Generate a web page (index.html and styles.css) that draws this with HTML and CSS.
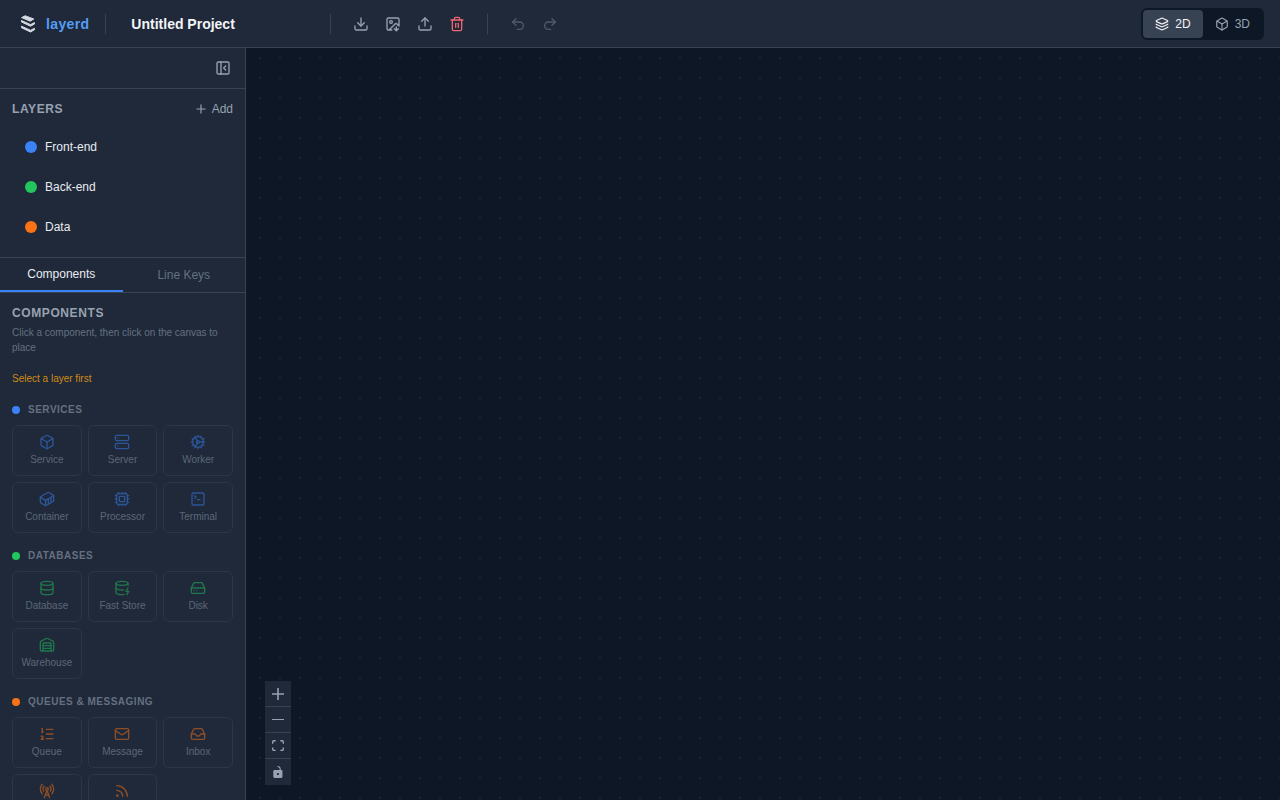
FILE: index.html
```html
<!DOCTYPE html>
<html lang="en">
<head>
    <meta charset="UTF-8">
    <meta name="viewport" content="width=device-width, initial-scale=1.0">
    <title>layerd</title>
    <link rel="stylesheet" href="styles.css">
</head>
<body>
    <header class="topbar">
        <a class="logo" href="#">
            <svg class="logo-mark" viewBox="0 0 24 24">
                <path d="M9.200 3.800 17.800 7 14.200 9.200 5.600 5.600z"/>
                <path d="M5.500 8.500 14.500 12.600 18.500 10.600V12L14.500 14.200 5.500 10z"/>
                <path d="M5.500 14.200 14.500 18.300 18.500 16.300V17.700L14.500 20 5.500 15.700z"/>
            </svg>
            <span>layerd</span>
        </a>
        <div class="divider"></div>
        <input class="project-name" type="text" value="Untitled Project" aria-label="Project name">
        <div class="divider"></div>
        <div class="tools">
            <button class="tool" title="Save">
                <svg class="icon" viewBox="0 0 24 24"><path d="M21 15v4a2 2 0 0 1-2 2H5a2 2 0 0 1-2-2v-4"/><path d="m7 10 5 5 5-5"/><path d="M12 15V3"/></svg>
            </button>
            <button class="tool" title="Export image">
                <svg class="icon" viewBox="0 0 24 24"><path d="M10.300 21H5a2 2 0 0 1-2-2V5a2 2 0 0 1 2-2h14a2 2 0 0 1 2 2v10l-3.100-3.100a2 2 0 0 0-2.814.014L6 21"/><path d="m14 19 3 3v-5.500"/><path d="m17 22 3-3"/><circle cx="9" cy="9" r="2"/></svg>
            </button>
            <button class="tool" title="Import">
                <svg class="icon" viewBox="0 0 24 24"><path d="M21 15v4a2 2 0 0 1-2 2H5a2 2 0 0 1-2-2v-4"/><path d="m17 8-5-5-5 5"/><path d="M12 3v12"/></svg>
            </button>
            <button class="tool danger" title="Clear">
                <svg class="icon" viewBox="0 0 24 24"><path d="M3 6h18"/><path d="M19 6v14a2 2 0 0 1-2 2H7a2 2 0 0 1-2-2V6"/><path d="M8 6V4a2 2 0 0 1 2-2h4a2 2 0 0 1 2 2v2"/><path d="M10 11v6"/><path d="M14 11v6"/></svg>
            </button>
        </div>
        <div class="divider"></div>
        <div class="tools">
            <button class="tool" title="Undo" disabled>
                <svg class="icon" viewBox="0 0 24 24"><path d="M9 14 4 9l5-5"/><path d="M4 9h10.500a5.500 5.500 0 0 1 0 11H11"/></svg>
            </button>
            <button class="tool" title="Redo" disabled>
                <svg class="icon" viewBox="0 0 24 24"><path d="m15 14 5-5-5-5"/><path d="M20 9H9.500a5.500 5.500 0 0 0 0 11H13"/></svg>
            </button>
        </div>
        <div class="view-toggle">
            <button class="view active">
                <svg class="icon" viewBox="0 0 24 24"><path d="M12.830 2.180a2 2 0 0 0-1.660 0L2.600 6.080a1 1 0 0 0 0 1.830l8.580 3.910a2 2 0 0 0 1.660 0l8.580-3.900a1 1 0 0 0 0-1.830z"/><path d="M2 12a1 1 0 0 0 .58.910l8.600 3.910a2 2 0 0 0 1.650 0l8.580-3.900A1 1 0 0 0 22 12"/><path d="M2 17a1 1 0 0 0 .58.910l8.600 3.910a2 2 0 0 0 1.650 0l8.580-3.900A1 1 0 0 0 22 17"/></svg>
                2D
            </button>
            <button class="view">
                <svg class="icon" viewBox="0 0 24 24"><path d="M21 8a2 2 0 0 0-1-1.730l-7-4a2 2 0 0 0-2 0l-7 4A2 2 0 0 0 3 8v8a2 2 0 0 0 1 1.730l7 4a2 2 0 0 0 2 0l7-4A2 2 0 0 0 21 16Z"/><path d="m3.300 7 8.700 5 8.700-5"/><path d="M12 22V12"/></svg>
                3D
            </button>
        </div>
    </header>

    <div class="workspace">
        <aside class="sidebar">
            <div class="sidebar-top">
                <button class="collapse" title="Collapse sidebar">
                    <svg class="icon" viewBox="0 0 24 24"><rect x="3" y="3" width="18" height="18" rx="2"/><path d="M9 3v18"/><path d="m16 15-3-3 3-3"/></svg>
                </button>
            </div>

            <section class="layers">
                <div class="layers-head">
                    <h2 class="title">Layers</h2>
                    <button class="add">
                        <svg class="icon" viewBox="0 0 24 24"><path d="M5 12h14"/><path d="M12 5v14"/></svg>
                        Add
                    </button>
                </div>
                <ul class="layer-list">
                    <li><button class="layer"><span class="dot blue"></span>Front-end</button></li>
                    <li><button class="layer"><span class="dot green"></span>Back-end</button></li>
                    <li><button class="layer"><span class="dot orange"></span>Data</button></li>
                </ul>
            </section>

            <div class="tabs">
                <button class="tab active">Components</button>
                <button class="tab">Line Keys</button>
            </div>

            <div class="palette">
                <h2 class="title">Components</h2>
                <p class="hint">Click a component, then click on the canvas to place</p>
                <p class="warning">Select a layer first</p>

                <section class="group services">
                    <h3 class="group-title"><span class="dot blue"></span>Services</h3>
                    <div class="cards">
                        <button class="card" disabled>
                            <svg class="icon" viewBox="0 0 24 24"><path d="M21 8a2 2 0 0 0-1-1.730l-7-4a2 2 0 0 0-2 0l-7 4A2 2 0 0 0 3 8v8a2 2 0 0 0 1 1.730l7 4a2 2 0 0 0 2 0l7-4A2 2 0 0 0 21 16Z"/><path d="m3.300 7 8.700 5 8.700-5"/><path d="M12 22V12"/></svg>
                            Service
                        </button>
                        <button class="card" disabled>
                            <svg class="icon" viewBox="0 0 24 24"><rect x="2" y="2" width="20" height="8" rx="2"/><rect x="2" y="14" width="20" height="8" rx="2"/><path d="M6 6h.01"/><path d="M6 18h.01"/></svg>
                            Server
                        </button>
                        <button class="card" disabled>
                            <svg class="icon" viewBox="0 0 24 24"><path d="M12 20a8 8 0 1 0 0-16 8 8 0 0 0 0 16Z"/><path d="M12 14a2 2 0 1 0 0-4 2 2 0 0 0 0 4Z"/><path d="M12 2v2"/><path d="M12 22v-2"/><path d="m17 20.660-1-1.730"/><path d="M11 10.270 7 3.340"/><path d="m20.660 17-1.730-1"/><path d="m3.340 7 1.730 1"/><path d="M14 12h8"/><path d="M2 12h2"/><path d="m20.660 7-1.730 1"/><path d="m3.340 17 1.730-1"/><path d="m17 3.340-1 1.730"/><path d="m11 13.730-4 6.930"/></svg>
                            Worker
                        </button>
                        <button class="card" disabled>
                            <svg class="icon" viewBox="0 0 24 24"><path d="M22 7.700c0-.6-.4-1.200-.8-1.500l-6.300-3.900a1.720 1.720 0 0 0-1.700 0l-10.300 6c-.5.2-.9.8-.9 1.400v6.600c0 .5.4 1.200.8 1.500l6.300 3.900a1.720 1.720 0 0 0 1.700 0l10.300-6c.5-.3.9-1 .9-1.500Z"/><path d="M10 21.900V14L2.100 9.100"/><path d="m10 14 11.900-6.900"/><path d="M14 19.800v-8.100"/><path d="M18 17.500V9.400"/></svg>
                            Container
                        </button>
                        <button class="card" disabled>
                            <svg class="icon" viewBox="0 0 24 24"><rect x="4" y="4" width="16" height="16" rx="2"/><rect x="8" y="8" width="8" height="8" rx="1"/><path d="M12 20v2M12 2v2M17 20v2M17 2v2M7 20v2M7 2v2M2 12h2M2 17h2M2 7h2M20 12h2M20 17h2M20 7h2"/></svg>
                            Processor
                        </button>
                        <button class="card" disabled>
                            <svg class="icon" viewBox="0 0 24 24"><path d="m7 11 2-2-2-2"/><path d="M11 13h4"/><rect x="3" y="3" width="18" height="18" rx="2"/></svg>
                            Terminal
                        </button>
                    </div>
                </section>

                <section class="group databases">
                    <h3 class="group-title"><span class="dot green"></span>Databases</h3>
                    <div class="cards">
                        <button class="card" disabled>
                            <svg class="icon" viewBox="0 0 24 24"><ellipse cx="12" cy="5" rx="9" ry="3"/><path d="M3 5v14a9 3 0 0 0 18 0V5"/><path d="M3 12a9 3 0 0 0 18 0"/></svg>
                            Database
                        </button>
                        <button class="card" disabled>
                            <svg class="icon" viewBox="0 0 24 24"><ellipse cx="12" cy="5" rx="9" ry="3"/><path d="M3 5v14a9 3 0 0 0 12 2.840"/><path d="M21 5v3"/><path d="m21 12-3 5h4l-3 5"/><path d="M3 12a9 3 0 0 0 11.590 2.870"/></svg>
                            Fast Store
                        </button>
                        <button class="card" disabled>
                            <svg class="icon" viewBox="0 0 24 24"><path d="M22 12H2"/><path d="M5.450 5.110 2 12v6a2 2 0 0 0 2 2h16a2 2 0 0 0 2-2v-6l-3.450-6.890A2 2 0 0 0 16.760 4H7.240a2 2 0 0 0-1.790 1.110z"/><path d="M6 16h.01"/><path d="M10 16h.01"/></svg>
                            Disk
                        </button>
                        <button class="card" disabled>
                            <svg class="icon" viewBox="0 0 24 24"><path d="M18 21V10a1 1 0 0 0-1-1H7a1 1 0 0 0-1 1v11"/><path d="M22 19a2 2 0 0 1-2 2H4a2 2 0 0 1-2-2V8a2 2 0 0 1 1.132-1.803l7.950-3.974a2 2 0 0 1 1.837 0l7.948 3.974A2 2 0 0 1 22 8z"/><path d="M6 13h12"/><path d="M6 17h12"/></svg>
                            Warehouse
                        </button>
                    </div>
                </section>

                <section class="group queues">
                    <h3 class="group-title"><span class="dot orange"></span>Queues &amp; Messaging</h3>
                    <div class="cards">
                        <button class="card" disabled>
                            <svg class="icon" viewBox="0 0 24 24"><path d="M11 5h10"/><path d="M11 12h10"/><path d="M11 19h10"/><path d="M4 4h1v5"/><path d="M4 9h2"/><path d="M6.500 20H3.400c0-1 2.600-1.925 2.600-3.500a1.500 1.500 0 0 0-2.600-1.020"/></svg>
                            Queue
                        </button>
                        <button class="card" disabled>
                            <svg class="icon" viewBox="0 0 24 24"><rect x="2" y="4" width="20" height="16" rx="2"/><path d="m22 7-8.970 5.700a1.940 1.940 0 0 1-2.060 0L2 7"/></svg>
                            Message
                        </button>
                        <button class="card" disabled>
                            <svg class="icon" viewBox="0 0 24 24"><path d="M22 12h-6l-2 3h-4l-2-3H2"/><path d="M5.450 5.110 2 12v6a2 2 0 0 0 2 2h16a2 2 0 0 0 2-2v-6l-3.450-6.890A2 2 0 0 0 16.760 4H7.240a2 2 0 0 0-1.790 1.110z"/></svg>
                            Inbox
                        </button>
                        <button class="card" disabled>
                            <svg class="icon" viewBox="0 0 24 24"><path d="M4.900 16.100C1 12.200 1 5.800 4.900 1.900"/><path d="M7.800 4.700a6.140 6.140 0 0 0-.8 7.500"/><circle cx="12" cy="9" r="2"/><path d="M16.200 4.800c2 2 2.260 5.110.8 7.470"/><path d="M19.100 1.900a9.960 9.960 0 0 1 0 14.100"/><path d="M9.500 18h5"/><path d="m8 22 4-11 4 11"/></svg>
                            Pub/Sub
                        </button>
                        <button class="card" disabled>
                            <svg class="icon" viewBox="0 0 24 24"><path d="M4 11a9 9 0 0 1 9 9"/><path d="M4 4a16 16 0 0 1 16 16"/><circle cx="5" cy="19" r="1"/></svg>
                            Stream
                        </button>
                    </div>
                </section>
            </div>
        </aside>

        <main class="canvas">
            <div class="controls">
                <button class="control" title="Zoom in">
                    <svg viewBox="0 0 32 32"><path d="M32 18.133H18.133V32h-4.266V18.133H0v-4.266h13.867V0h4.266v13.867H32z"/></svg>
                </button>
                <button class="control" title="Zoom out">
                    <svg viewBox="0 0 32 5"><path d="M0 0h32v4.200H0z"/></svg>
                </button>
                <button class="control" title="Fit view">
                    <svg viewBox="0 0 32 30"><path d="M3.692 4.630c0-.53.4-.938.939-.938h5.215V0H4.708C2.130 0 0 2.054 0 4.630v5.216h3.692V4.631zM27.354 0h-5.200v3.692h5.170c.53 0 .984.4.984.939v5.215H32V4.631A4.624 4.624 0 0 0 27.354 0zm.954 24.830c0 .532-.4.940-.939.940h-5.215v3.768h5.215c2.577 0 4.631-2.130 4.631-4.707v-5.139h-3.692v5.139zm-23.677.940a.919.919 0 0 1-.939-.940v-5.138H0v5.139c0 2.577 2.130 4.707 4.708 4.707h5.138V25.770H4.631z"/></svg>
                </button>
                <button class="control" title="Toggle interactivity">
                    <svg viewBox="0 0 25 32"><path d="M21.333 10.667H19.810V7.619C19.810 3.429 16.380 0 12.190 0c-4.114 1.828-1.370 2.133.305 2.438 1.676.305 4.420 2.590 4.420 5.181v3.048H3.047A3.056 3.056 0 0 0 0 13.714v15.238A3.056 3.056 0 0 0 3.048 32h18.285a3.056 3.056 0 0 0 3.048-3.048V13.714a3.056 3.056 0 0 0-3.048-3.047zM12.190 24.533a3.056 3.056 0 0 1-3.047-3.047 3.056 3.056 0 0 1 3.047-3.048 3.056 3.056 0 0 1 3.048 3.048 3.056 3.056 0 0 1-3.048 3.047z"/></svg>
                </button>
            </div>
        </main>
    </div>
</body>
</html>
```

FILE: styles.css
```css
* {
    box-sizing: border-box;
    margin: 0;
    padding: 0;
}
body {
    height: 100vh;
    display: flex;
    flex-direction: column;
    overflow: hidden;
    font-family: "Liberation Sans", Arial, sans-serif;
    font-size: 12px;
    line-height: 16px;
    background-color: #0e1726;
    color: #e8ebef;
}
button,
input {
    font: inherit;
    color: inherit;
    background: none;
    border: none;
}
button {
    cursor: pointer;
}
ul {
    list-style: none;
}
.icon {
    width: 16px;
    height: 16px;
    flex-shrink: 0;
    fill: none;
    stroke: currentColor;
    stroke-width: 2;
    stroke-linecap: round;
    stroke-linejoin: round;
}

/* top bar */
.topbar {
    display: flex;
    align-items: center;
    gap: 16px;
    height: 48px;
    padding: 0 16px;
    flex-shrink: 0;
    background-color: #1f293a;
    border-bottom: 1px solid #374353;
}
.logo {
    display: flex;
    align-items: center;
    gap: 6px;
    font-size: 14px;
    font-weight: bold;
    letter-spacing: 0.025em;
    color: #539ef5;
    text-decoration: none;
}
.logo-mark {
    width: 24px;
    height: 24px;
    fill: #d5dae2;
    stroke: #d5dae2;
    stroke-width: 1;
    stroke-linejoin: round;
}
.divider {
    width: 1px;
    height: 20px;
    background-color: #374353;
}
.project-name {
    width: 192px;
    padding: 4px 9px;
    font-size: 14px;
    font-weight: bold;
    color: #f3f4f6;
}
.tools {
    display: flex;
    gap: 4px;
}
.tool {
    display: flex;
    padding: 6px;
    color: #98a2b0;
}
.tool.danger {
    color: #ee6673;
}
.tool:disabled {
    opacity: 0.4;
    cursor: default;
}
.view-toggle {
    display: flex;
    margin-left: auto;
    padding: 2px;
    border-radius: 6px;
    background-color: #0e1726;
}
.view {
    display: flex;
    align-items: center;
    gap: 6px;
    padding: 6px 12px;
    border-radius: 4px;
    color: #98a2b0;
}
.view .icon {
    width: 14px;
    height: 14px;
}
.view.active {
    background-color: #374253;
    color: #f3f4f6;
}

/* sidebar */
.workspace {
    display: flex;
    flex: 1;
    min-height: 0;
}
.sidebar {
    display: flex;
    flex-direction: column;
    width: 246px;
    flex-shrink: 0;
    background-color: #1f293a;
    border-right: 1px solid #374353;
}
.sidebar-top {
    display: flex;
    justify-content: flex-end;
    padding: 6px 8px;
    border-bottom: 1px solid #374353;
}
.collapse {
    display: flex;
    padding: 6px;
    color: #98a2b0;
}
.title {
    font-size: 12px;
    line-height: 16px;
    letter-spacing: 0.05em;
    text-transform: uppercase;
    color: #98a2b0;
}
.layers {
    padding: 12px;
    border-bottom: 1px solid #374353;
}
.layers-head {
    display: flex;
    justify-content: space-between;
    margin-bottom: 12px;
}
.add {
    display: flex;
    align-items: center;
    gap: 4px;
    color: #98a2b0;
}
.add .icon {
    width: 14px;
    height: 14px;
}
.layer-list {
    display: flex;
    flex-direction: column;
    gap: 4px;
}
.layer {
    display: flex;
    align-items: center;
    gap: 8px;
    width: 100%;
    padding: 10px 13px;
}
.dot {
    width: 12px;
    height: 12px;
    border-radius: 50%;
}
.dot.blue {
    background-color: #3b82f6;
}
.dot.green {
    background-color: #22c55e;
}
.dot.orange {
    background-color: #f97316;
}
.tabs {
    display: flex;
    border-bottom: 1px solid #374353;
}
.tab {
    flex: 1;
    height: 34px;
    color: #657080;
}
.tab.active {
    color: #e8ebef;
    border-bottom: 2px solid #3b82f6;
}

/* component palette */
.palette {
    flex: 1;
    min-height: 0;
    padding: 12px;
    overflow-y: auto;
    scrollbar-width: none;
}
.hint,
.warning {
    font-size: 10px;
    line-height: 15px;
}
.hint {
    margin: 4px 0 16px;
    color: #657080;
}
.warning {
    margin-bottom: 17px;
    color: #d08a14;
}
.group {
    margin-top: 16px;
}
.group-title {
    display: flex;
    align-items: center;
    gap: 8px;
    margin-bottom: 8px;
    font-size: 10px;
    line-height: 14px;
    letter-spacing: 0.05em;
    text-transform: uppercase;
    color: #657080;
}
.group-title .dot {
    width: 8px;
    height: 8px;
}
.cards {
    display: grid;
    grid-template-columns: repeat(3, 1fr);
    gap: 6px;
}
.card {
    display: flex;
    flex-direction: column;
    align-items: center;
    gap: 2px;
    padding: 8px 0;
    font-size: 10px;
    line-height: 15px;
    color: #98a2b0;
    border: 1px solid #374353;
    border-radius: 6px;
    opacity: 0.5;
}
.services .icon {
    color: #3b82f6;
}
.databases .icon {
    color: #22c55e;
}
.queues .icon {
    color: #f97316;
}

/* canvas */
.canvas {
    position: relative;
    flex: 1;
    background-image: radial-gradient(circle at 14px 10px, #192433 1px, transparent 1px);
    background-size: 20px 20px;
}
.controls {
    position: absolute;
    left: 19px;
    bottom: 15px;
    display: flex;
    flex-direction: column;
}
.control {
    display: flex;
    align-items: center;
    justify-content: center;
    width: 26px;
    height: 26px;
    background-color: #1f293a;
    border-bottom: 1px solid #374353;
}
.control:last-child {
    border-bottom: none;
}
.control svg {
    width: 12px;
    max-height: 12px;
    fill: #98a2b0;
}
```
